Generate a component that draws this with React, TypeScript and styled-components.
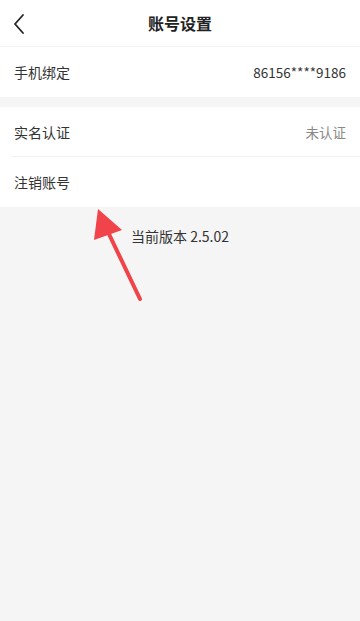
import React from 'react';
import styled, { createGlobalStyle } from 'styled-components';

const GlobalStyle = createGlobalStyle`
    html, body {
        margin: 0;
        padding: 0;
        background: #f5f5f5;
    }
    body {
        font-family: "Noto Sans CJK SC", "Noto Sans", sans-serif;
    }
`;

const Page = styled.div`
    position: relative;
    width: 360px;
    height: 621px;
    background: #f5f5f5;
    overflow: hidden;
`;

const Header = styled.div`
    height: 46px;
    background: #fff;
    display: flex;
    align-items: center;
    justify-content: center;
    position: relative;
    border-bottom: 1px solid #f3f3f3;
`;

const BackButton = styled.div`
    position: absolute;
    left: 12px;
    top: 12px;
    width: 22px;
    height: 24px;
    display: flex;
    align-items: center;
`;

const Title = styled.h1`
    margin: 0;
    font-size: 16px;
    font-weight: 700;
    color: #222;
`;

const Group = styled.div<{ $gap?: boolean }>`
    background: #fff;
    margin-top: ${(p) => (p.$gap ? '10px' : '0')};
`;

const Row = styled.div<{ $divider?: boolean }>`
    height: 50px;
    padding: 0 14px;
    display: flex;
    align-items: center;
    justify-content: space-between;
    position: relative;
    ${(p) =>
        p.$divider &&
        `&::after {
            content: '';
            position: absolute;
            left: 12px;
            right: 0;
            bottom: 0;
            height: 1px;
            background: #f2f2f2;
        }`}
`;

const Label = styled.span`
    font-size: 14px;
    color: #333;
`;

const Value = styled.span<{ $muted?: boolean }>`
    font-size: 13.5px;
    color: ${(p) => (p.$muted ? '#888' : '#333')};
`;

const Version = styled.div`
    text-align: center;
    margin-top: 19px;
    font-size: 14px;
    color: #333;
`;

const Arrow = styled.svg`
    position: absolute;
    left: 90px;
    top: 204px;
`;

export default function App() {
    return (
        <Page>
            <GlobalStyle />
            <Header>
                <BackButton>
                    <svg width="14" height="22" viewBox="0 0 14 22">
                        <path d="M11 2 L3 11 L11 20" fill="none" stroke="#222" strokeWidth="1.8" strokeLinecap="round" strokeLinejoin="round" />
                    </svg>
                </BackButton>
                <Title>账号设置</Title>
            </Header>
            <Group>
                <Row>
                    <Label>手机绑定</Label>
                    <Value>86156****9186</Value>
                </Row>
            </Group>
            <Group $gap>
                <Row $divider>
                    <Label>实名认证</Label>
                    <Value $muted>未认证</Value>
                </Row>
                <Row>
                    <Label>注销账号</Label>
                </Row>
            </Group>
            <Version>当前版本 2.5.02</Version>
            <Arrow width="60" height="100" viewBox="0 0 60 100">
                <line x1="50" y1="95" x2="18" y2="28" stroke="#f0434a" strokeWidth="4" strokeLinecap="round" />
                <polygon points="8,5 32,26 4,36" fill="#f0434a" />
            </Arrow>
        </Page>
    );
}
